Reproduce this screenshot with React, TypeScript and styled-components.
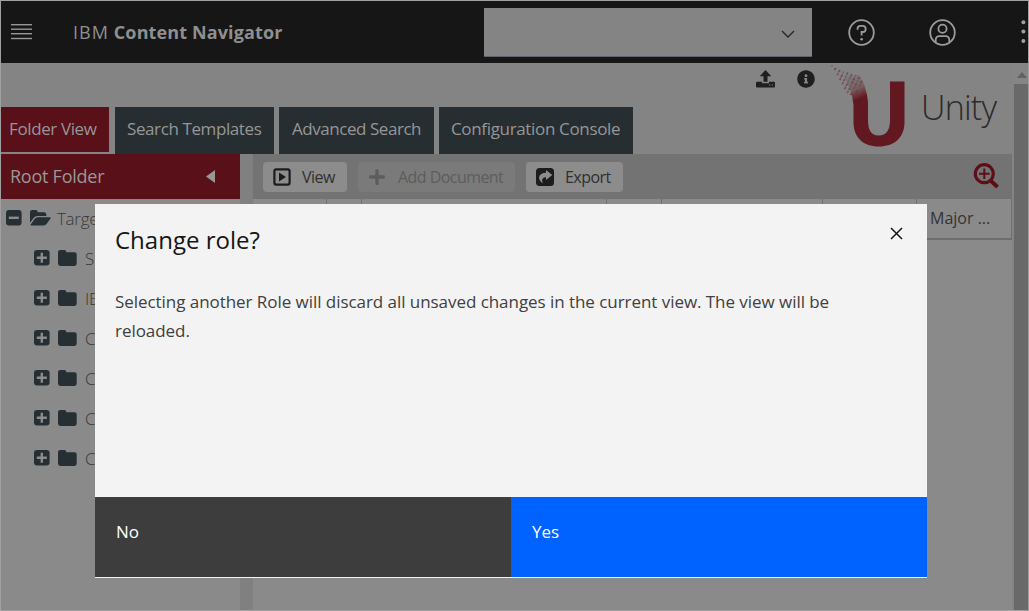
import React from "react";
import styled, { createGlobalStyle } from "styled-components";
import { FaInfoCircle, FaPlus } from "react-icons/fa";

const GlobalStyle = createGlobalStyle`
  * { box-sizing: border-box; }
  body { margin: 0; overflow: hidden; background: #858585; font-family: "Open Sans", sans-serif; }
  svg { display: block; flex: none; }
  button { font-family: inherit; border: 0; margin: 0; text-align: left; }
`;

const Page = styled.div`
  width: 1029px;
  height: 611px;
  border: 1px solid #a0a0a0;
  background: #848484;
  position: relative;
  display: flex;
  flex-direction: column;
  overflow: hidden;
`;

const Header = styled.header`
  height: 62px;
  flex: none;
  background: #161616;
  display: flex;
  align-items: center;
  padding-left: 10px;
  color: #8f8f8f;
`;

const Product = styled.div`
  margin-left: 41px;
  width: 411px;
  font-size: 18px;
  letter-spacing: 0.24px;
  white-space: nowrap;
  span { font-weight: 400; letter-spacing: 1px; }
  b { font-weight: 700; letter-spacing: 0.12px; }
`;

const RoleSelect = styled.div`
  width: 328px;
  height: 49px;
  margin-top: 1px;
  background: #848484;
  border-bottom: 1px solid #5f636b;
  display: flex;
  align-items: center;
  justify-content: flex-end;
  padding: 4px 17px 0 0;
`;

const HeaderIcons = styled.div`
  display: flex;
  align-items: center;
  margin-left: 36px;
`;

const Gap = styled.span<{ $w: number }>`
  width: ${(p) => p.$w}px;
  flex: none;
`;

const Main = styled.div`
  flex: 1;
  display: flex;
  min-height: 0;
`;

const Content = styled.div`
  width: 1013px;
  display: flex;
  flex-direction: column;
`;

const ScrollBar = styled.div`
  width: 14px;
  background: #858585;
  display: flex;
  flex-direction: column;
  align-items: flex-end;
`;

const ScrollArrow = styled.div`
  height: 21px;
  padding: 9px 1px 0 0;
`;

const ScrollThumb = styled.div`
  flex: 1;
  width: 14px;
  background: #696969;
`;

const Banner = styled.div`
  height: 91px;
  flex: none;
  display: flex;
`;

const Tabs = styled.nav`
  display: flex;
  align-items: flex-start;
  padding-top: 44px;
  width: 754px;
`;

const Tab = styled.div<{ $width: number; $active?: boolean; $spacing: number; $gap: number; $pad: number }>`
  width: ${(p) => p.$width}px;
  margin-right: ${(p) => p.$gap}px;
  height: ${(p) => (p.$active ? 45 : 47)}px;
  background: ${(p) => (p.$active ? "#5a1019" : "#262e31")};
  color: #969696;
  font-size: 17px;
  line-height: 44px;
  padding-left: ${(p) => p.$pad}px;
  letter-spacing: ${(p) => p.$spacing}px;
  white-space: nowrap;
`;

const Brand = styled.div`
  display: flex;
  align-items: flex-start;
`;

const BrandIcon = styled.div<{ $left: number; $top: number }>`
  margin-left: ${(p) => p.$left}px;
  margin-top: ${(p) => p.$top}px;
  color: #1f1f1f;
`;

const BrandName = styled.div`
  margin: 21px 0 0 14px;
  font-size: 34px;
  line-height: 46px;
  font-weight: 300;
  color: #2b2b2b;
  letter-spacing: -0.8px;
`;

const Workspace = styled.div`
  flex: 1;
  display: flex;
  min-height: 0;
`;

const TreePane = styled.aside`
  width: 239px;
  background: #8a8a8a;
`;

const TreeTitle = styled.div`
  height: 45px;
  background: #5a1019;
  color: #989898;
  font-size: 18px;
  letter-spacing: -0.25px;
  padding: 0 25px 1px 9px;
  display: flex;
  align-items: center;
  justify-content: space-between;
`;

const TreeRow = styled.div<{ $level: number }>`
  height: 40px;
  display: flex;
  align-items: center;
  padding: 0 0 2px ${(p) => 5 + p.$level * 28}px;
  color: #262f33;
  font-size: 17px;
`;

const TreeIcon = styled.span<{ $width: number }>`
  width: ${(p) => p.$width}px;
`;

const TreeLabel = styled.span`
  font-weight: 300;
  color: #383838;
  white-space: nowrap;
  letter-spacing: -0.3px;
`;

const Splitter = styled.div`
  width: 13px;
  background: #808080;
`;

const DocumentPane = styled.section`
  width: 759px;
  background: #8a8a8a;
`;

const Toolbar = styled.div`
  height: 45px;
  background: #737373;
  display: flex;
  align-items: center;
  padding: 1px 12px 0 10px;
`;

const ToolButton = styled.button<{ $width: number; $gap: number; $muted?: boolean }>`
  width: ${(p) => p.$width}px;
  margin-right: ${(p) => p.$gap}px;
  height: 30px;
  border-radius: 4px;
  background: ${(p) => (p.$muted ? "#7a7a7a" : "#8c8c8c")};
  color: ${(p) => (p.$muted ? "#5d5d5d" : "#303030")};
  display: flex;
  align-items: center;
  gap: ${(p) => (p.$muted ? 12 : 11)}px;
  padding: 0 0 0 10px;
  font-size: 16px;
  letter-spacing: -0.55px;
  white-space: nowrap;
`;

const ZoomAction = styled.div`
  margin: -3px 0 0 auto;
`;

const ColumnRow = styled.div`
  height: 41px;
  display: flex;
  border-bottom: 2px solid #6e6e6e;
`;

const Column = styled.div<{ $width: number }>`
  width: ${(p) => p.$width}px;
  border-right: 1px solid #707070;
  padding-left: 13px;
  line-height: 39px;
  font-size: 16px;
  color: #343434;
`;

const Dialog = styled.div`
  position: absolute;
  left: 94px;
  top: 203px;
  width: 832px;
  height: 374px;
  display: flex;
  flex-direction: column;
  background: #f3f3f3;
  border-bottom: 1px solid #f3f3f3;
`;

const DialogHead = styled.div`
  display: flex;
  justify-content: space-between;
  align-items: flex-start;
  height: 58px;
  padding: 20px 24px 0 20px;
`;

const DialogTitle = styled.h1`
  margin: 0;
  font-size: 24px;
  font-weight: 400;
  line-height: 32px;
  color: #161616;
`;

const CloseButton = styled.button`
  padding: 3px 0 0;
  background: none;
`;

const DialogText = styled.p`
  margin: 25px 0 0;
  padding-left: 20px;
  flex: 1;
  font-size: 17px;
  line-height: 29px;
  color: #404040;
  letter-spacing: -0.05px;
`;

const DialogActions = styled.div`
  display: flex;
  height: 80px;
`;

const ActionButton = styled.button<{ $primary?: boolean }>`
  flex: 1;
  background: ${(p) => (p.$primary ? "#0062ff" : "#3d3d3d")};
  color: #fff;
  font-size: 17px;
  line-height: 24px;
  padding: 0 0 10px 21px;
`;

const MenuIcon = () => (
  <svg width="21" height="16" fill="#979797">
    {[0, 4.5, 9, 13.8].map((y) => <rect key={y} y={y} width="21" height="1.4" />)}
  </svg>
);

const ChevronIcon = () => (
  <svg width="14" height="9" fill="none" stroke="#272727" strokeWidth="1.4"><path d="M1 1l6 6 6-6" /></svg>
);

const HelpIcon = () => (
  <svg width="27" height="27" fill="none" stroke="#9b9b9b" strokeWidth="1.8">
    <circle cx="13.5" cy="13.5" r="12.3" />
    <path d="M9.5 10.8V10c0-2 1.2-3.1 3-3.1h2c1.8 0 3.2 1.2 3.2 3 0 1.9-1.3 3.1-3.2 3.1h-.9v3.6" />
    <circle cx="13.6" cy="20.2" r="1.3" fill="#9b9b9b" stroke="none" />
  </svg>
);

const UserIcon = () => (
  <svg width="27" height="27" fill="none" stroke="#9b9b9b" strokeWidth="1.8">
    <circle cx="13.5" cy="13.5" r="12.3" />
    <circle cx="13.5" cy="9.7" r="4.1" />
    <path d="M6.7 23v-2.2a3.6 3.6 0 0 1 3.6-3.6h6.4a3.6 3.6 0 0 1 3.6 3.6V23" />
  </svg>
);

const DotsIcon = () => (
  <svg width="5" height="24" fill="#a0a0a0">
    {[2.2, 11.5, 21].map((y) => <circle key={y} cx="2.4" cy={y} r="2" />)}
  </svg>
);

const UploadIcon = () => (
  <svg width="19" height="18" fill="currentColor">
    <path d="M9.5 0l5.8 6.3h-3.8v5.4h-4V6.3H3.7z" />
    <path d="M1 11.7h5v1.5h7v-1.5h5q1 0 1 1v3.8q0 1-1 1H1q-1 0-1-1v-3.8q0-1 1-1z" />
    <path d="M13 15h1.3M15.8 15H17" stroke="#848484" strokeWidth="1" />
  </svg>
);

const ToggleIcon = ({ open = false }: { open?: boolean }) => (
  <svg width="16" height="16">
    <rect width="15.600" height="15.600" rx="3" fill="currentColor" />
    <path d={open ? "M2.800 7.800h10" : "M2.800 7.800h10M7.800 2.800v10"} stroke="#8c8c8c" strokeWidth="2.400" />
  </svg>
);

const FolderIcon = () => (
  <svg width="19" height="16" fill="currentColor">
    <path d="M2.300 0H6.200Q8.400 0 8.400 2.300H16.400Q18.700 2.300 18.700 4.600V13.600Q18.700 16 16.400 16H2.300Q0 16 0 13.600V2.300Q0 0 2.300 0Z" />
  </svg>
);

const FolderOpenIcon = () => (
  <svg width="21" height="16" fill="currentColor">
    <path d="M0 12.800V2.300Q0 0 2.300 0H5.600Q7.800 0 7.800 2.300H14Q16.300 2.300 16.300 4.600V6H7.300Q5.300 6 4 7.600Z" />
    <path d="M7.600 7.300H20Q21.300 7.300 20.500 8.500L16.700 13.800Q15.400 15.500 13.600 15.500H1.300Q0 15.500 .9 14.200L4.600 9Q5.900 7.300 7.600 7.300Z" />
  </svg>
);

const scaleColors = ["#743b42", "#4f6672", "#7a3b42", "#6d4c60", "#4a6f78", "#7c3038"];

const scaleRows = [
  { x: 6, y: 5, count: 1 }, { x: 10, y: 7, count: 2 }, { x: 14, y: 8.5, count: 3 }, { x: 18, y: 9.5, count: 4 },
  { x: 22, y: 11, count: 5 }, { x: 26, y: 12, count: 6 }, { x: 29.5, y: 14, count: 6 }, { x: 32, y: 18, count: 5 },
];

const UnityLogo = () => (
  <svg width="77" height="84">
    <defs>
      <linearGradient id="fade" x1="14" y1="10" x2="26" y2="39" gradientUnits="userSpaceOnUse">
        <stop offset="0" stopColor="#651922" stopOpacity="0" />
        <stop offset="0.6" stopColor="#651922" stopOpacity="0.35" />
        <stop offset="0.95" stopColor="#611820" />
      </linearGradient>
    </defs>
    <path d="M13 12L29 12Q36 21 38 39H23Q22 27 13 12Z" fill="url(#fade)" />
    <path d="M22.900 38.500H38V57C38 67 41 72.500 48.800 72.500S60 67 60 57V18.500H74.500V59C74.500 75 64 83.500 48.800 83.500S23.500 75 23.500 59V42Z" fill="#611820" />
    {scaleRows.map((row, r) =>
      Array.from({ length: row.count }, (_, i) => (
        <path
          key={`${r}-${i}`}
          d={`M${row.x - i * 1.5} ${row.y + i * 3.2}l-1.500 2.200`}
          stroke={scaleColors[(r * 2 + i) % scaleColors.length]}
          strokeWidth="1.500"
          opacity="0.8"
        />
      ))
    )}
    <circle cx="2" cy="3" r=".8" fill="#75585b" />
  </svg>
);

const CollapseIcon = () => (
  <svg width="9" height="13"><path d="M9 0v13L0 6.500z" fill="#989898" /></svg>
);

const PlayBoxIcon = () => (
  <svg width="18" height="18">
    <rect x="1.4" y="1.4" width="15.2" height="15.2" rx="1.8" fill="none" stroke="#1c1c1c" strokeWidth="2.2" />
    <path d="M6 4.400l7 4.600-7 4.600z" fill="#1c1c1c" />
  </svg>
);

const ExportIcon = () => (
  <svg width="18" height="18">
    <rect width="18" height="18" rx="3.500" fill="#1c1c1c" />
    <path d="M10 2l6.300 5-6.300 5V9.300C6.500 9.300 5.300 11.500 6.800 15.500 1 11.500 2 5 10 4.800z" fill="#8c8c8c" />
  </svg>
);

const SearchPlusIcon = () => (
  <svg width="27" height="26" fill="none" stroke="#5d0f19">
    <circle cx="11.300" cy="10.700" r="9" strokeWidth="3.200" />
    <path d="M17.500 17.500l7 6.500" strokeWidth="4" />
    <path d="M6 10.700h10.600M11.300 5.500v10.400" strokeWidth="2" />
  </svg>
);

const CloseIcon = () => (
  <svg width="13" height="13" stroke="#161616" strokeWidth="1.5"><path d="M1 1l11 11M12 1L1 12" /></svg>
);

const folders = ["S", "IB", "C", "C", "C", "C"];
const columns = [74, 35, 245, 55, 161, 94];

export default function App() {
  return (
    <>
      <GlobalStyle />
      <Page>
        <Header>
          <MenuIcon />
          <Product><span>IBM</span> <b>Content Navigator</b></Product>
          <RoleSelect><ChevronIcon /></RoleSelect>
          <HeaderIcons>
            <HelpIcon /><Gap $w={54} /><UserIcon /><Gap $w={65} /><DotsIcon />
          </HeaderIcons>
        </Header>
        <Main>
          <Content>
            <Banner>
              <Tabs>
                <Tab $width={108} $gap={6} $pad={8} $spacing={-0.38} $active>Folder View</Tab>
                <Tab $width={159} $gap={5} $pad={12} $spacing={-0.4}>Search Templates</Tab>
                <Tab $width={155} $gap={5} $pad={13} $spacing={-0.45}>Advanced Search</Tab>
                <Tab $width={194} $gap={0} $pad={12} $spacing={-0.34}>Configuration Console</Tab>
              </Tabs>
              <Brand>
                <BrandIcon $left={1} $top={7}><UploadIcon /></BrandIcon>
                <BrandIcon $left={22} $top={7}><FaInfoCircle size={18} /></BrandIcon>
                <BrandIcon $left={15} $top={0}><UnityLogo /></BrandIcon>
                <BrandName>Unity</BrandName>
              </Brand>
            </Banner>
            <Workspace>
              <TreePane>
                <TreeTitle>Root Folder<CollapseIcon /></TreeTitle>
                <TreeRow $level={0}>
                  <TreeIcon $width={24}><ToggleIcon open /></TreeIcon>
                  <TreeIcon $width={27}><FolderOpenIcon /></TreeIcon>
                  <TreeLabel>Targe</TreeLabel>
                </TreeRow>
                {folders.map((name, i) => (
                  <TreeRow key={i} $level={1}>
                    <TreeIcon $width={24}><ToggleIcon /></TreeIcon>
                    <TreeIcon $width={27}><FolderIcon /></TreeIcon>
                    <TreeLabel>{name}</TreeLabel>
                  </TreeRow>
                ))}
              </TreePane>
              <Splitter />
              <DocumentPane>
                <Toolbar>
                  <ToolButton $width={84} $gap={11}><PlayBoxIcon />View</ToolButton>
                  <ToolButton $width={157} $gap={11} $muted><FaPlus size={18} />Add Document</ToolButton>
                  <ToolButton $width={97} $gap={0}><ExportIcon />Export</ToolButton>
                  <ZoomAction><SearchPlusIcon /></ZoomAction>
                </Toolbar>
                <ColumnRow>
                  {columns.map((width, i) => <Column key={i} $width={width} />)}
                  <Column $width={95}>Major ...</Column>
                </ColumnRow>
              </DocumentPane>
            </Workspace>
          </Content>
          <ScrollBar>
            <ScrollArrow><svg width="10" height="6"><path d="M5 0l5 6H0z" fill="#626262" /></svg></ScrollArrow>
            <ScrollThumb />
          </ScrollBar>
        </Main>
        <Dialog role="dialog">
          <DialogHead>
            <DialogTitle>Change role?</DialogTitle>
            <CloseButton aria-label="Close"><CloseIcon /></CloseButton>
          </DialogHead>
          <DialogText>
            Selecting another Role will discard all unsaved changes in the current view. The view will be<br />reloaded.
          </DialogText>
          <DialogActions>
            <ActionButton>No</ActionButton>
            <ActionButton $primary>Yes</ActionButton>
          </DialogActions>
        </Dialog>
      </Page>
    </>
  );
}
